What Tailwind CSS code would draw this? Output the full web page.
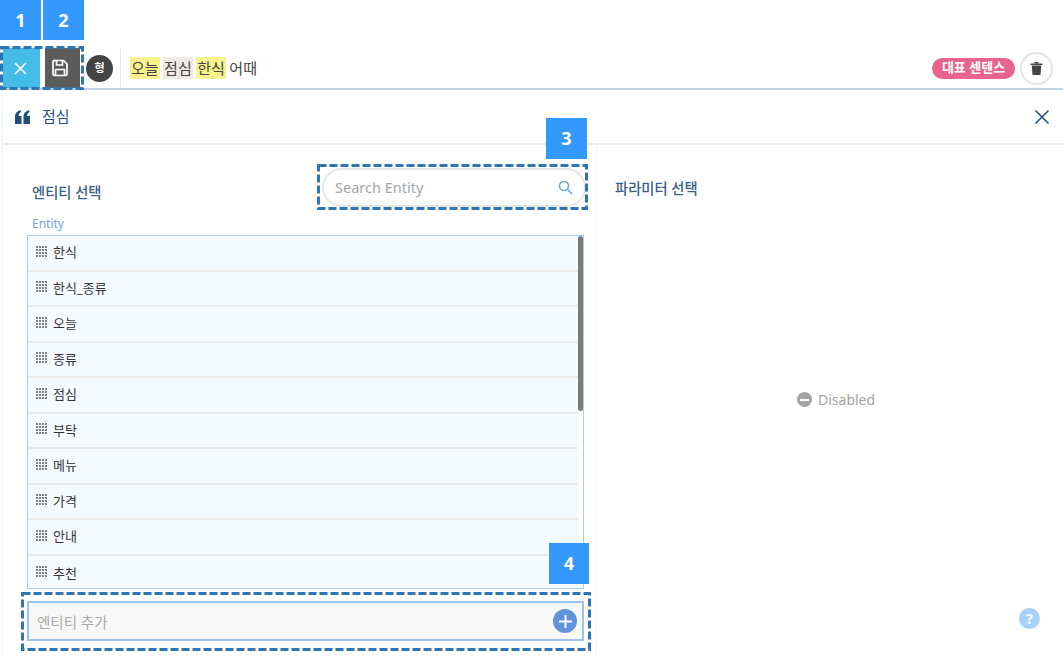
<!DOCTYPE html>
<html lang="ko">
<head>
    <meta charset="UTF-8">
    <meta name="viewport" content="width=device-width, initial-scale=1.0">
    <script src="https://cdn.jsdelivr.net/npm/@tailwindcss/browser@4"></script>
    <title>Entity</title>
</head>
<body class="bg-white w-[1063px] h-[656px] overflow-hidden relative font-['Noto_Sans','Noto_Sans_CJK_KR',sans-serif] text-[13px] text-[#333]">

    <!-- sentence row -->
    <div class="mt-[48px] h-[42px] flex items-center border-b-2 border-[#bcd5ea]">
        <button class="w-[37px] h-[40px] ml-[3px] bg-[#45bce5] flex items-center justify-center">
            <svg class="mr-[3px]" width="13" height="13" viewBox="0 0 13 13" fill="none" stroke="white" stroke-width="1.7"><path d="M1 1l11 11M12 1L1 12"/></svg>
        </button>
        <button class="w-[35px] h-[40px] ml-[5px] bg-[#5c5c5c] flex items-center justify-center">
            <svg class="mr-[5px]" width="18" height="18" viewBox="0 0 18 18" fill="none" stroke="white" stroke-width="1.7" stroke-linejoin="round"><path d="M2.500 1.500h10l3.500 3.500v10a1.500 1.500 0 0 1-1.500 1.500h-11a1.500 1.500 0 0 1-1.500-1.500v-12a1.500 1.500 0 0 1 .5-1z"/><path d="M5.500 1.500v4.500h6v-4.500M4.500 16.500v-6h9v6"/></svg>
        </button>
        <div class="ml-[6px] w-[27px] h-[27px] rounded-full bg-[#444] text-white text-[11px] font-bold flex items-center justify-center">형</div>
        <div class="ml-[7px] h-[40px] border-l border-[#e6e6e6] pl-[9px] flex items-center gap-[3.500px] text-[15px] leading-[22px] text-[#444]">
            <span class="bg-[#f6f28c] px-px">오늘</span>
            <span class="bg-[#f4e8e2] px-px">점심</span>
            <span class="bg-[#f6f28c] px-px">한식</span>
            <span>어때</span>
        </div>
        <div class="ml-auto mr-[10px] flex items-center gap-[5px]">
            <span class="h-[21px] w-[83px] rounded-full bg-[#e8648f] text-white text-[13px] font-bold flex items-center justify-center">대표 센텐스</span>
            <button class="w-[33px] h-[33px] rounded-full border-2 border-[#e4e4e4] flex items-center justify-center">
                <svg width="13" height="14" viewBox="0 0 13 14" fill="#444"><path d="M0.500 2.500h12v1.500h-12z"/><path d="M4.500 1h4v1.500h-4z"/><path d="M1.800 4.500h9.400l-.7 9.500h-8z"/></svg>
            </button>
        </div>
    </div>

    <!-- panel -->
    <div class="ml-[2px] border-l border-[#e8f0f8]">
        <div class="h-[55px] border-b-2 border-[#ececec] flex items-center pl-[12px] pr-[13px] text-[#2b527e]">
            <svg width="15" height="14" viewBox="0 0 15 14" fill="#1f4e7c"><path d="M0 14V6q0-4 5.500-6l.5 2Q3.500 3 3.500 6H6.500V14z"/><path d="M8.500 14V6q0-4 5.500-6l.5 2Q12 3 12 6h3V14z"/></svg>
            <span class="ml-[12px] text-[15px]">점심</span>
            <svg class="ml-auto" width="16" height="16" viewBox="0 0 16 16" fill="none" stroke="#1f4e7c" stroke-width="1.5"><path d="M1.500 1.500l13 13M14.500 1.500l-13 13"/></svg>
        </div>

        <div class="flex h-[511px]">
            <!-- entity column -->
            <div class="w-[594px] border-r border-[#f2f5f8] pl-[24px] pr-[12px]">
                <div class="flex items-start justify-between">
                    <h3 class="mt-[38px] ml-[5px] text-[14.300px] font-medium leading-[20px] text-[#3d5f85]">엔티티 선택</h3>
                    <div class="mt-[23px] mr-[-2px] w-[264px] h-[39px] rounded-full border-2 border-[#e6e6e6] flex items-center pl-[11px] pr-[11px] text-[14.500px] text-[#a6a6a6]">
                        <span>Search Entity</span>
                        <svg class="ml-auto" width="15" height="15" viewBox="0 0 15 15" fill="none" stroke="#6ea4e0" stroke-width="1.6"><circle cx="6" cy="6" r="4.500"/><path d="M9.500 9.500l4.500 4.500"/></svg>
                    </div>
                </div>
                <div class="ml-[5px] mt-[9px] text-[12px] leading-[16px] text-[#6ea4e4]">Entity</div>
                <div class="relative mt-[3px] w-[557px] h-[354px] border border-[#a9ccf2] bg-[#f5faff] overflow-hidden">
                    <ul id="entities" class="mr-[5px]"></ul>
                    <div class="absolute right-0 top-0 bottom-0 w-[5px] bg-white"></div>
                    <div class="absolute right-0 top-0 h-[175px] w-[5px] rounded-sm bg-[#7a7a7a]"></div>
                </div>
                <div class="mt-[12px] w-[557px] h-[40px] border-2 border-[#9cc3ee] bg-[#f8f8f8] flex items-center pl-[8px] pr-[5px] text-[14.500px] text-[#aaa]">
                    <span class="pt-[3px]">엔티티 추가</span>
                    <span class="ml-auto w-[24px] h-[24px] rounded-full bg-[#5f94dc] flex items-center justify-center">
                        <svg width="13" height="13" viewBox="0 0 13 13" stroke="white" stroke-width="2"><path d="M6.500 0v13M0 6.500h13"/></svg>
                    </span>
                </div>
            </div>

            <!-- parameter column -->
            <div class="flex-1 relative pl-[18px]">
                <h3 class="mt-[34px] text-[14.300px] font-medium leading-[20px] text-[#3d5f85]">파라미터 선택</h3>
                <div class="mt-[190px] ml-[182px] flex items-center gap-[6px] text-[14px] text-[#a3a3a3]">
                    <span class="w-[15px] h-[15px] rounded-full bg-[#a3a3a3] flex items-center justify-center"><span class="w-[9px] h-[2px] bg-white"></span></span>
                    Disabled
                </div>
                <span class="absolute left-[422px] top-[463px] w-[21px] h-[21px] rounded-full bg-[#a9d2fb] text-white text-[14px] font-bold flex items-center justify-center">?</span>
            </div>
        </div>
    </div>

    <!-- annotation tags -->
    <div class="absolute left-0 top-0 w-[41px] h-[40px] bg-[#3399ff] text-white text-[18px] font-bold flex items-center justify-center">1</div>
    <div class="absolute left-[43px] top-0 w-[41px] h-[40px] bg-[#3399ff] text-white text-[18px] font-bold flex items-center justify-center">2</div>
    <div class="absolute left-[546px] top-[118px] w-[41px] h-[41px] bg-[#3399ff] text-white text-[18px] font-bold flex items-center justify-center">3</div>
    <div class="absolute left-[549px] top-[543px] w-[40px] h-[41px] bg-[#3399ff] text-white text-[18px] font-bold flex items-center justify-center">4</div>

    <!-- annotation outlines -->
    <svg class="absolute left-0 top-[46px]" width="84" height="44" fill="none" stroke="#2f75b5" stroke-width="3" stroke-dasharray="8 3"><rect x="1.500" y="1.500" width="81" height="41"/></svg>
    <svg class="absolute left-[317px] top-[164px]" width="271" height="46" fill="none" stroke="#2f75b5" stroke-width="3" stroke-dasharray="8 3"><rect x="1.500" y="1.500" width="268" height="43"/></svg>
    <svg class="absolute left-[21px] top-[592px]" width="570" height="59" fill="none" stroke="#2f75b5" stroke-width="3" stroke-dasharray="8 3"><rect x="1.500" y="1.500" width="567" height="56"/></svg>

    <script>
        const names = ['한식', '한식_종류', '오늘', '종류', '점심', '부탁', '메뉴', '가격', '안내', '추천'];
        const dots = [0, 3, 6, 9].map(y => [0, 3, 6, 9].map(x => `<rect x="${x}" y="${y}" width="2" height="2"/>`).join('')).join('');

        document.getElementById('entities').innerHTML = names.map((name, index) =>
            `
            <li class="h-[35.500px] flex items-center pl-[8px] gap-[5px] text-[#333] ${index < 9 ? 'border-b-2 border-[#ebebeb]' : ''}">
                <svg class="mb-[2px]" width="12" height="12" viewBox="0 0 12 12" fill="#808080">${dots}</svg>${name}
            </li>
            `
        ).join('');
    </script>
</body>
</html>
